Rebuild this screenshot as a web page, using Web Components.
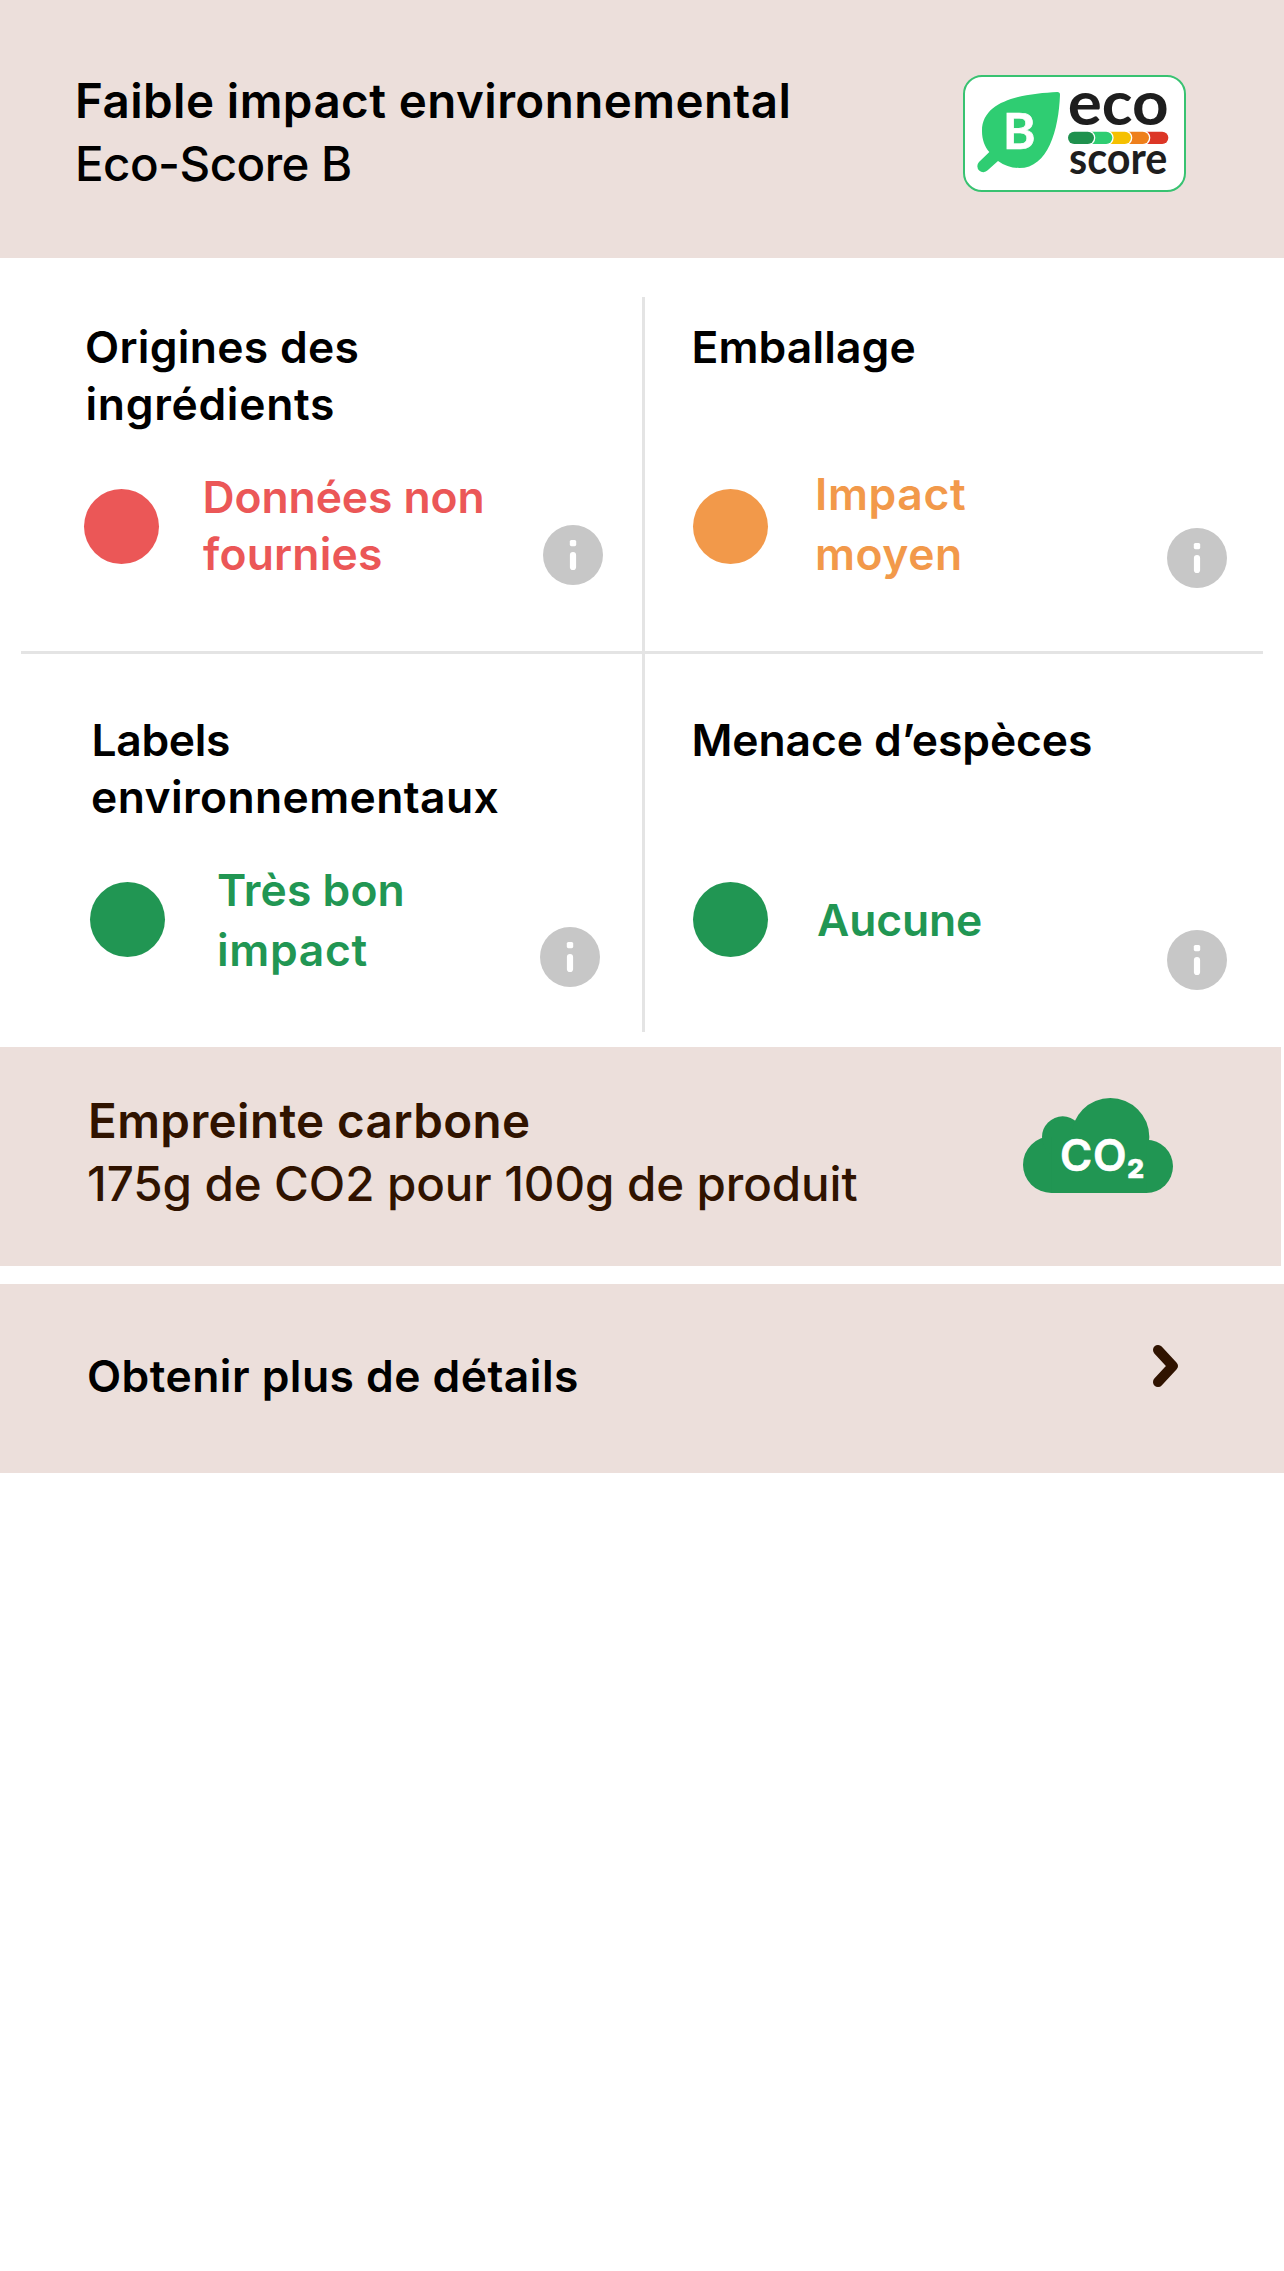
<!DOCTYPE html>
<html lang="fr">
<head>
<meta charset="utf-8">
<title>Eco-Score</title>
<style>
  body { margin: 0; background: #fff; color: #000; font-family: Inter, "Liberation Sans", sans-serif; }
</style>
</head>
<body>
<eco-page></eco-page>

<script>
const define = (name, html, setup) => {
  const tpl = document.createElement('template');
  tpl.innerHTML = html;
  customElements.define(name, class extends HTMLElement {
    connectedCallback() {
      if (this.shadowRoot) return;
      this.attachShadow({ mode: 'open' }).appendChild(tpl.content.cloneNode(true));
      if (setup) setup(this, this.shadowRoot);
    }
  });
};

/* One line of text, tracked so that its ink spans `w` pixels from `x`. */
const pen = document.createElement('canvas').getContext('2d');
define('text-line', `
  <style>
    :host { display: block; white-space: nowrap; font-kerning: normal; }
  </style>
  <slot></slot>`, (el) => {
  const cs = getComputedStyle(el);
  const text = el.textContent;
  pen.font = `${cs.fontWeight} ${cs.fontSize} ${cs.fontFamily}`;
  const m = pen.measureText(text);
  const ink = m.actualBoundingBoxRight + m.actualBoundingBoxLeft;
  const gap = (Number(el.getAttribute('w')) - ink) / (text.length - 1);
  el.style.letterSpacing = gap.toFixed(3) + 'px';
  el.style.marginLeft = (Number(el.getAttribute('x') || 0) + m.actualBoundingBoxLeft).toFixed(2) + 'px';
});

define('status-dot', `
  <style>:host { display: block; width: 75px; height: 75px; border-radius: 50%; background: currentColor; flex: none; }</style>`);

define('info-icon', `
  <style>:host { display: block; width: 60px; height: 60px; flex: none; } svg { display: block; }</style>
  <svg width="60" height="60" viewBox="0 0 60 60">
    <circle cx="30" cy="30" r="30" fill="#c7c7c7"/>
    <rect x="26.8" y="15" width="6.4" height="6.2" rx="1.6" fill="#fff"/>
    <rect x="26.9" y="27" width="6.2" height="18" rx="3.1" fill="#fff"/>
  </svg>`);

define('eco-logo', `
  <style>
    :host { display: block; width: 223px; height: 117px; flex: none; }
    svg { display: block; overflow: visible; }
    text { font-family: Lato, sans-serif; }
  </style>
  <svg width="223" height="117" viewBox="69 45 669 351">
    <rect x="72" y="48" width="663" height="345" rx="54" fill="#fff" stroke="#38c271" stroke-width="6"/>
    <path fill="#2fcd72" d="M352 96C262 101 126 116 126 213C126 239 134 260 148 276L117 306A18 18 0 0 0 143 331L174 303C194 317 214 324 238 324C324 324 356 210 360 104Q360 96 352 96Z"/>
    <text x="189" y="266" font-size="148" font-weight="700" fill="#fff" stroke="#fff" stroke-width="2">B</text>
    <text x="383" y="194" font-size="184" font-weight="700" fill="#1e1e1e" textLength="303" lengthAdjust="spacingAndGlyphs">eco</text>
    <text x="387" y="341" font-size="129" font-weight="700" fill="#1e1e1e" textLength="295" lengthAdjust="spacingAndGlyphs">score</text>
    <g stroke="#fff" stroke-width="8" paint-order="stroke">
      <rect x="540" y="215" width="145" height="37" rx="18.5" fill="#dc3626"/>
      <rect x="490" y="215" width="137" height="37" rx="18.5" fill="#ee7f1b"/>
      <rect x="440" y="215" width="133" height="37" rx="18.5" fill="#f5c000"/>
      <rect x="400" y="215" width="117" height="37" rx="18.5" fill="#2fcd72"/>
      <rect x="384" y="215" width="78" height="37" rx="18.5" fill="#1f914e"/>
    </g>
  </svg>`);

define('co2-cloud', `
  <style>
    :host { display: block; width: 150px; height: 95px; flex: none; }
    svg { display: block; }
    text { font-family: Inter, sans-serif; }
  </style>
  <svg width="150" height="95" viewBox="69 53 450 285">
    <g fill="#219653">
      <circle cx="154" cy="253" r="85"/>
      <circle cx="188" cy="170" r="62"/>
      <circle cx="331" cy="170" r="117"/>
      <circle cx="439" cy="258" r="80"/>
      <rect x="154" y="170" width="285" height="168"/>
    </g>
    <text x="180" y="271" font-size="131" font-weight="600" fill="#fff" stroke="#fff" stroke-width="2" textLength="200">CO</text>
    <text x="382" y="292" font-size="79" font-weight="800" fill="#fff" stroke="#fff" stroke-width="2" textLength="49">2</text>
  </svg>`);

define('chevron-icon', `
  <style>:host { display: block; width: 26px; height: 42px; flex: none; } svg { display: block; }</style>
  <svg width="26" height="42" viewBox="0 0 26 42">
    <path d="M5 5L19.8 21L5 37" fill="none" stroke="#301300" stroke-width="10" stroke-linecap="round" stroke-linejoin="round"/>
  </svg>`);

/* Full-width tinted strip: text on the left, a picture on the right. */
define('info-band', `
  <style>
    :host { display: flex; justify-content: space-between; align-items: flex-start; box-sizing: border-box;
            background: #ecdfdb; font-size: 47.5px; line-height: 63px; font-weight: 480; }
    ::slotted([strong]) { font-weight: 620; }
  </style>
  <div><slot></slot></div>
  <slot name="media"></slot>`);

define('score-cell', `
  <style>
    :host { display: block; box-sizing: border-box; font-size: 44.4px; line-height: 57px; font-weight: 610; }
    .title { height: 114px; }
    .status { display: flex; align-items: flex-start; color: var(--tone); }
    status-dot { margin: 56px 0 0 var(--dot-x); }
    .label { margin: var(--label-y) 0 0 38px; line-height: var(--label-lh, 60px); }
    info-icon { margin: var(--info-y) var(--info-r, 36px) 0 auto; }
  </style>
  <div class="title"><slot></slot></div>
  <div class="status">
    <status-dot></status-dot>
    <div class="label"><slot name="label"></slot></div>
    <info-icon></info-icon>
  </div>`);

define('score-grid', `
  <style>
    :host { display: grid; grid-template-columns: 621px 3px 618px; grid-template-rows: 354px 3px 378px;
            padding: 39px 21px 15px; }
    .v { grid-area: 1 / 2 / 4 / 3; background: #e4e4e4; }
    .h { grid-area: 2 / 1 / 3 / 4; background: #e4e4e4; }
    ::slotted([at="a"]) { grid-area: 1 / 1; }
    ::slotted([at="b"]) { grid-area: 1 / 3; }
    ::slotted([at="c"]) { grid-area: 3 / 1; }
    ::slotted([at="d"]) { grid-area: 3 / 3; }
  </style>
  <div class="v"></div><div class="h"></div>
  <slot></slot>`);

define('eco-page', `
  <style>
    :host { display: block; width: 1284px; min-height: 2271px; background: #fff; }
    .head { height: 258px; padding: 69px 98px 0 78px; }
    .head eco-logo { margin-top: 6px; }
    .carbon { height: 219px; width: 1281px; padding: 42px 108px 0 88px; color: #301300; }
    .carbon co2-cloud { margin-top: 8.7px; }
    .more { height: 189px; margin-top: 18px; padding: 61px 105px 0 88px; font-size: 44.4px; line-height: 63px; }
    .more chevron-icon { margin-top: 0; }
    .a { padding-top: 22px; --tone: #eb5757; --dot-x: 63px; --label-y: 36px; --label-lh: 57px; --info-y: 92px; --info-r: 39px; }
    .b { padding-top: 22px; --tone: #f2994a; --dot-x: 48px; --label-y: 31px; --info-y: 95px; }
    .c { padding-top: 58px; --tone: #219653; --dot-x: 69px; --label-y: 34px; --info-y: 101px; --info-r: 42px; }
    .d { padding-top: 58px; --tone: #219653; --dot-x: 48px; --label-y: 64px; --info-y: 104px; }
  </style>
  <info-band class="head">
    <text-line strong w="710.5">Faible impact environnemental</text-line>
    <text-line w="272">Eco-Score B</text-line>
    <eco-logo slot="media"></eco-logo>
  </info-band>
  <score-grid>
    <score-cell at="a" class="a">
      <text-line x="66" w="270.5">Origines des</text-line>
      <text-line x="66.5" w="245.5">ingrédients</text-line>
      <text-line slot="label" x="8.5" w="277">Données non</text-line>
      <text-line slot="label" x="6" w="178">fournies</text-line>
    </score-cell>
    <score-cell at="b" class="b">
      <text-line x="49.5" w="220">Emballage</text-line>
      <text-line slot="label" x="12" w="147">Impact</text-line>
      <text-line slot="label" x="11" w="143">moyen</text-line>
    </score-cell>
    <score-cell at="c" class="c">
      <text-line x="73.5" w="134.5">Labels</text-line>
      <text-line x="71" w="406.5">environnementaux</text-line>
      <text-line slot="label" x="15" w="184.5">Très bon</text-line>
      <text-line slot="label" x="16" w="147.5">impact</text-line>
    </score-cell>
    <score-cell at="d" class="d">
      <text-line x="49.5" w="396.5">Menace d’espèces</text-line>
      <text-line slot="label" x="12" w="163">Aucune</text-line>
    </score-cell>
  </score-grid>
  <info-band class="carbon">
    <text-line strong x="3" w="438">Empreinte carbone</text-line>
    <text-line x="1" w="768.5">175g de CO2 pour 100g de produit</text-line>
    <co2-cloud slot="media"></co2-cloud>
  </info-band>
  <info-band class="more">
    <text-line strong x="1" w="488">Obtenir plus de détails</text-line>
    <chevron-icon slot="media"></chevron-icon>
  </info-band>`);
</script>
</body>
</html>
